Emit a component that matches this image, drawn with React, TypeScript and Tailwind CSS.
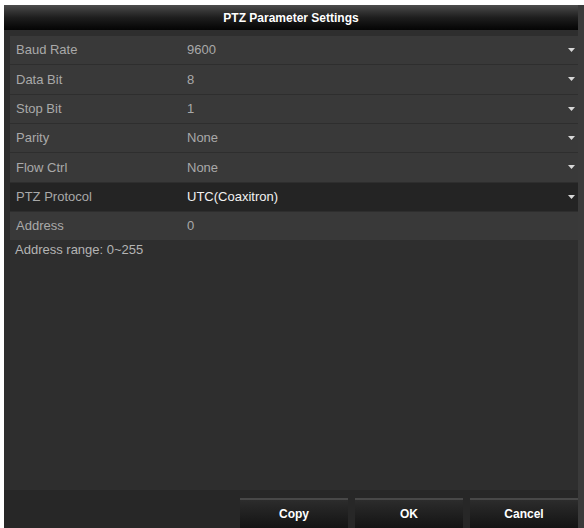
const rows: { label: string; value: string; arrow: boolean; active?: boolean }[] = [
  { label: "Baud Rate", value: "9600", arrow: true },
  { label: "Data Bit", value: "8", arrow: true },
  { label: "Stop Bit", value: "1", arrow: true },
  { label: "Parity", value: "None", arrow: true },
  { label: "Flow Ctrl", value: "None", arrow: true },
  { label: "PTZ Protocol", value: "UTC(Coaxitron)", arrow: true, active: true },
  { label: "Address", value: "0", arrow: false },
];

function Arrow() {
  return (
    <svg width="7" height="4" viewBox="0 0 7 4" className="mr-[3px]">
      <path d="M0 0 H7 L3.5 4 Z" fill="#d8d8d8" />
    </svg>
  );
}

export default function App() {
  return (
    <div
      className="w-[584px] h-[528px] bg-white pt-[5px] pl-[4px] overflow-hidden"
      style={{ fontFamily: '"Liberation Sans", Arial, sans-serif' }}>
      <div className="flex flex-col h-[523px] bg-[#2e2e2e] border-r-[6px] border-[#3a3a3a]">
        <div className="h-[25px] flex-none flex items-center justify-center bg-gradient-to-b from-[#4c4c4c] via-[#1e1e1e] to-[#050505] text-white font-bold text-[12px]">
          PTZ Parameter Settings
        </div>

        <div className="flex-1 flex flex-col pl-[6px] pt-[6px] gap-[1px]">
          {rows.map((r) => (
            <div
              key={r.label}
              className={`h-[28.33px] flex-none flex ${r.active ? "bg-[#242424]" : "bg-[#393939]"}`}>
              <div className="w-[170px] flex-none flex items-center pl-[6px] text-[13px] text-[#a9a9a9]">
                {r.label}
              </div>
              <div
                className={`flex-1 ml-[2px] flex items-center justify-between pl-[5px] text-[13px] ${
                  r.active ? "text-[#f2f2f2]" : "text-[#a9a9a9]"
                }`}>
                <span>{r.value}</span>
                {r.arrow && <Arrow />}
              </div>
            </div>
          ))}
          <div className="pl-[5px] text-[13px] leading-[17px] text-[#b4b4b4]">
            Address range: 0~255
          </div>
        </div>

        <div className="h-[38px] flex-none bg-[#272727] flex items-end justify-end gap-[7px]">
          {["Copy", "OK", "Cancel"].map((b) => (
            <div
              key={b}
              className="w-[108px] h-[30px] flex items-center justify-center border-t-2 border-[#484848] bg-gradient-to-b from-[#2c2c2c] to-[#141414] text-white font-bold text-[12px]">
              {b}
            </div>
          ))}
        </div>
      </div>
    </div>
  );
}
